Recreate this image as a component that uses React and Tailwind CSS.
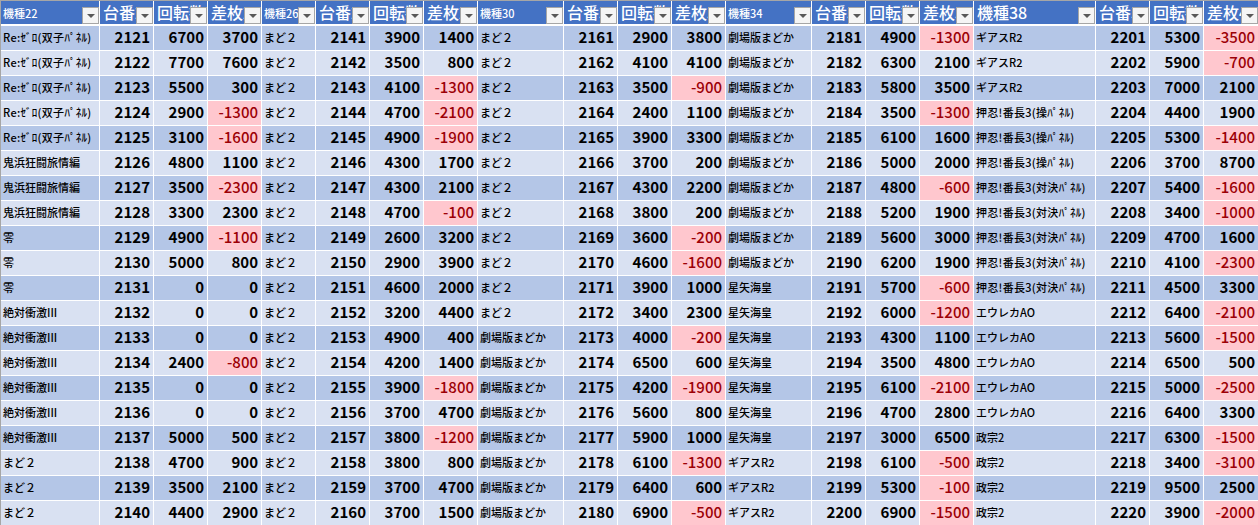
import React from "react";

const c1 = [
"Re:ｾﾞﾛ(双子ﾊﾟﾈﾙ)","Re:ｾﾞﾛ(双子ﾊﾟﾈﾙ)","Re:ｾﾞﾛ(双子ﾊﾟﾈﾙ)","Re:ｾﾞﾛ(双子ﾊﾟﾈﾙ)","Re:ｾﾞﾛ(双子ﾊﾟﾈﾙ)","鬼浜狂闘旅情編","鬼浜狂闘旅情編","鬼浜狂闘旅情編","零","零","零","絶対衝激III","絶対衝激III","絶対衝激III","絶対衝激III","絶対衝激III","絶対衝激III","まど２","まど２","まど２"];
const d1 = [[6700,3700],[7700,7600],[5500,300],[2900,-1300],[3100,-1600],[4800,1100],[3500,-2300],[3300,2300],[4900,-1100],[5000,800],[0,0],[0,0],[0,0],[2400,-800],[0,0],[0,0],[5000,500],[4700,900],[3500,2100],[4400,2900]];
const c2 = Array(20).fill("まど２");
const d2 = [[3900,1400],[3500,800],[4100,-1300],[4700,-2100],[4900,-1900],[4300,1700],[4300,2100],[4700,-100],[2600,3200],[2900,3900],[4600,2000],[3200,4400],[4900,400],[4200,1400],[3900,-1800],[3700,4700],[3800,-1200],[3800,800],[3700,4700],[3700,1500]];
const c3 = Array(12).fill("まど２").concat(Array(8).fill("劇場版まどか"));
const d3 = [[2900,3800],[4100,4100],[3500,-900],[2400,1100],[3900,3300],[3700,200],[4300,2200],[3800,200],[3600,-200],[4600,-1600],[3900,1000],[3400,2300],[4000,-200],[6500,600],[4200,-1900],[5600,800],[5900,1000],[6100,-1300],[6400,600],[6900,-500]];
const c4 = Array(10).fill("劇場版まどか").concat(Array(7).fill("星矢海皇")).concat(Array(3).fill("ギアスR2"));
const d4 = [[4900,-1300],[6300,2100],[5800,3500],[3500,-1300],[6100,1600],[5000,2000],[4800,-600],[5200,1900],[5600,3000],[6200,1900],[5700,-600],[6000,-1200],[4300,1100],[3500,4800],[6100,-2100],[4700,2800],[3000,6500],[6100,-500],[5300,-100],[6900,-1500]];
const c5 = ["ギアスR2","ギアスR2","ギアスR2","押忍!番長3(操ﾊﾟﾈﾙ)","押忍!番長3(操ﾊﾟﾈﾙ)","押忍!番長3(操ﾊﾟﾈﾙ)","押忍!番長3(対決ﾊﾟﾈﾙ)","押忍!番長3(対決ﾊﾟﾈﾙ)","押忍!番長3(対決ﾊﾟﾈﾙ)","押忍!番長3(対決ﾊﾟﾈﾙ)","押忍!番長3(対決ﾊﾟﾈﾙ)","エウレカAO","エウレカAO","エウレカAO","エウレカAO","エウレカAO","政宗2","政宗2","政宗2","政宗2"];
const d5 = [[5300,-3500],[5900,-700],[7000,2100],[4400,1900],[5300,-1400],[3700,8700],[5400,-1600],[3400,-1000],[4700,1600],[4100,-2300],[4500,3300],[6400,-2100],[5600,-1500],[6500,500],[5000,-2500],[6400,3300],[6300,-1500],[3400,-3100],[9500,2500],[3900,-2000]];

const groups = [
  { name: c1, data: d1, start: 2121, head: ["機種22","台番23","回転数24","差枚25"], small: true, w: 99 },
  { name: c2, data: d2, start: 2141, head: ["機種26","台番27","回転数28","差枚29"], small: true, w: 54 },
  { name: c3, data: d3, start: 2161, head: ["機種30","台番31","回転数32","差枚33"], small: true, w: 86 },
  { name: c4, data: d4, start: 2181, head: ["機種34","台番35","回転数36","差枚37"], small: true, w: 86 },
  { name: c5, data: d5, start: 2201, head: ["機種38","台番39","回転数40","差枚41"], small: false, w: 122 },
];

function Head({ label, w, small, last }) {
  return (
    <div style={{ width: w }} className={`relative shrink-0 h-full overflow-hidden bg-[#4472c4] text-white whitespace-nowrap flex items-center ${last ? "" : "border-r border-white"}`}>
      <span className={small ? "pl-[2px] text-[11px] font-medium leading-none mt-[1px]" : "pl-[3px] text-[16px] font-medium leading-none mt-[-1px]"}>{label}</span>
      <div className="absolute right-0 top-[6px] w-[17px] h-[17px] bg-[#f5f5f5] border border-[#a6a6a6] flex items-center justify-center">
        <div className="w-0 h-0 border-l-[4px] border-r-[4px] border-t-[4px] border-l-transparent border-r-transparent border-t-[#595959]" />
      </div>
    </div>
  );
}

function Num({ v, bg, last }) {
  const neg = v < 0;
  return (
    <div className={`w-[54px] shrink-0 h-full flex items-center justify-end pr-[3px] pb-[1px] text-[15px] tabular-nums ${neg ? "bg-[#ffc7ce] text-[#9c0006] font-medium" : `${bg} text-black font-semibold`} ${last ? "" : "border-r border-white"}`}>
      {v}
    </div>
  );
}

export default function App() {
  return (
    <div className="w-[1258px] h-[525px] overflow-hidden bg-white border-t border-l border-[#a6a6a6] box-border font-['Noto_Sans_CJK_JP','Noto_Sans',sans-serif]">
      <div className="flex h-[23px] border-b-2 border-white box-content">
        {groups.map((g, gi) => (
          <React.Fragment key={gi}>
            <Head label={g.head[0]} w={g.w} small={g.small} />
            <Head label={g.head[1]} w={54} />
            <Head label={g.head[2]} w={54} />
            <Head label={g.head[3]} w={54} last={gi === 4} />
          </React.Fragment>
        ))}
      </div>
      {Array.from({ length: 20 }).map((_, r) => {
        const bg = r % 2 === 0 ? "bg-[#b4c6e7]" : "bg-[#d9e1f2]";
        return (
          <div key={r} className="flex h-[25px] border-b border-white">
            {groups.map((g, gi) => (
              <React.Fragment key={gi}>
                <div style={{ width: g.w }} className={`shrink-0 h-full flex items-center pl-[2px] pb-[1px] text-[11px] font-medium text-black whitespace-nowrap overflow-hidden border-r border-white ${/[ﾊ-ﾝ]/.test(g.name[r]) ? "tracking-[0.3px]" : ""} ${bg}`}>
                  {g.name[r]}
                </div>
                <Num v={g.start + r} bg={bg} />
                <Num v={g.data[r][0]} bg={bg} />
                <Num v={g.data[r][1]} bg={bg} last={gi === 4} />
              </React.Fragment>
            ))}
          </div>
        );
      })}
    </div>
  );
}
